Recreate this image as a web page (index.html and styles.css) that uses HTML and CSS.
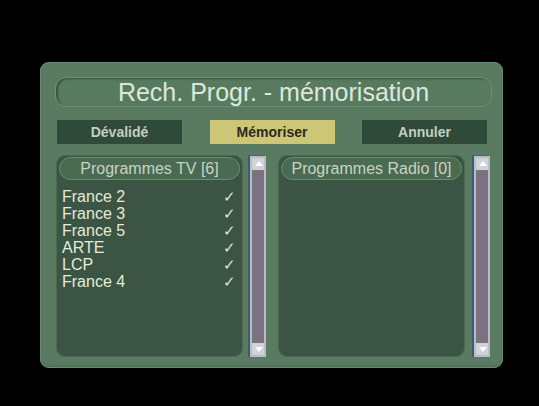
FILE: index.html
```html
<!DOCTYPE html>
<html lang="fr">
<head>
    <meta charset="UTF-8">
    <title>Rech. Progr. - mémorisation</title>
    <link rel="stylesheet" href="styles.css">
</head>
<body>
    <div class="screen">
        <div class="dialog">
            <div class="title-bar">Rech. Progr. - mémorisation</div>

            <div class="actions">
                <div class="action">Dévalidé</div>
                <div class="action active">Mémoriser</div>
                <div class="action">Annuler</div>
            </div>

            <div class="lists">
                <div class="list-group">
                    <div class="list">
                        <div class="list-header">Programmes TV [6]</div>
                        <ul class="channels">
                            <li><span>France 2</span><span class="check">✓</span></li>
                            <li><span>France 3</span><span class="check">✓</span></li>
                            <li><span>France 5</span><span class="check">✓</span></li>
                            <li><span>ARTE</span><span class="check">✓</span></li>
                            <li><span>LCP</span><span class="check">✓</span></li>
                            <li><span>France 4</span><span class="check">✓</span></li>
                        </ul>
                    </div>
                    <div class="scrollbar">
                        <div class="arrow up"></div>
                        <div class="track"></div>
                        <div class="arrow down"></div>
                    </div>
                </div>

                <div class="list-group radio">
                    <div class="list">
                        <div class="list-header">Programmes Radio [0]</div>
                        <ul class="channels"></ul>
                    </div>
                    <div class="scrollbar">
                        <div class="arrow up"></div>
                        <div class="track"></div>
                        <div class="arrow down"></div>
                    </div>
                </div>
            </div>
        </div>
    </div>
</body>
</html>
```

FILE: styles.css
```css
body {
    margin: 0;
    padding: 0;
    background-color: #000;
    font-family: "Liberation Sans", Arial, sans-serif;
}

.screen {
    width: 539px;
    height: 406px;
    padding: 62px 0 0 40px;
    box-sizing: border-box;
}

.dialog {
    width: 463px;
    height: 306px;
    box-sizing: border-box;
    padding: 15px 11px 11px 15px;
    background-color: #5a7b61;
    border-radius: 9px;
    box-shadow: inset 0 0 0 1px #6a8c70, inset 0 -2px 3px rgba(0, 0, 0, 0.15);
    display: flex;
    flex-direction: column;
}

.title-bar {
    height: 30px;
    box-sizing: border-box;
    border-radius: 11px;
    border: 1px solid #6d8f73;
    box-shadow: inset 2px 1px 2px rgba(30, 50, 35, 0.55);
    background-color: #587b5f;
    color: #dde8dc;
    font-size: 25px;
    line-height: 28px;
    text-align: center;
}

.actions {
    display: flex;
    justify-content: space-between;
    padding: 0 5px 0 2px;
    margin-top: 13px;
}

.action {
    width: 125px;
    height: 24px;
    background-color: #2f4a38;
    color: #c3cfc0;
    font-size: 14px;
    font-weight: bold;
    line-height: 24px;
    text-align: center;
}

.action.active {
    background-color: #cdc676;
    color: #2a2a1e;
}

.lists {
    display: flex;
    gap: 12px;
    margin-top: 11px;
    height: 202px;
    padding-left: 1px;
}

.list-group {
    display: flex;
    gap: 5px;
}

.list-group.radio {
    gap: 7px;
}

.list {
    width: 187px;
    box-sizing: border-box;
    background-color: #3b5443;
    border-radius: 9px;
    border: 1px solid #4c6a52;
    padding: 1px 2px;
}

.list-header {
    height: 23px;
    box-sizing: border-box;
    border-radius: 12px;
    background-color: #4b6a52;
    border: 1px solid #6c8c70;
    color: #c6d4c4;
    font-size: 16px;
    line-height: 21px;
    text-align: center;
}

.channels {
    list-style: none;
    margin: 8px 0 0;
    padding: 0 4px 0 3px;
}

.channels li {
    display: flex;
    justify-content: space-between;
    height: 17px;
    line-height: 17px;
    font-size: 16px;
    color: #e4ecd9;
}

.check {
    color: #dfe6d6;
    font-size: 15px;
}

.scrollbar {
    width: 18px;
    box-sizing: border-box;
    border-left: 2px solid #3f5a78;
    border-top: 1px solid #4d6276;
    background-color: #b8bec8;
    padding: 2px;
    display: flex;
    flex-direction: column;
}

.track {
    flex: 1;
    background-color: #7b7180;
}

.arrow {
    height: 12px;
    background-color: #cfd3d6;
    position: relative;
}

.arrow::after {
    content: "";
    position: absolute;
    left: 3px;
    border-left: 4px solid transparent;
    border-right: 4px solid transparent;
}

.arrow.up::after {
    top: 3px;
    border-bottom: 5px solid #ffffff;
}

.arrow.down::after {
    top: 4px;
    border-top: 5px solid #ffffff;
}
```
